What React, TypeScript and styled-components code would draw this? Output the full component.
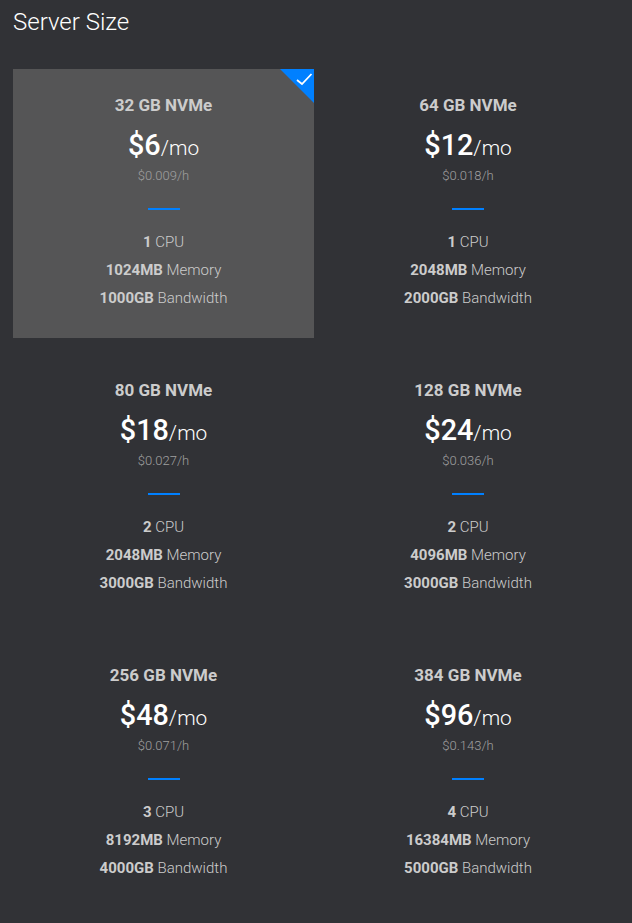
import React from "react";
import styled, { createGlobalStyle } from "styled-components";

const Global = createGlobalStyle`
  html, body { margin: 0; padding: 0; background: #313236; }
  body { font-family: Roboto, "Liberation Sans", sans-serif; }
`;

const Page = styled.div`
  width: 632px;
  height: 923px;
  overflow: hidden;
  box-sizing: border-box;
  padding: 8px 0 0 13px;
  background: #313236;
`;

const Title = styled.h2`
  margin: 0 0 33px;
  font-size: 24px;
  line-height: 28px;
  font-weight: 300;
  color: #fff;
`;

const Grid = styled.div`
  display: grid;
  grid-template-columns: 301px 301px;
  column-gap: 3.5px;
  row-gap: 16px;
`;

const Card = styled.div<{ $selected?: boolean }>`
  position: relative;
  height: 269px;
  box-sizing: border-box;
  padding-top: 26px;
  text-align: center;
  background: ${(p) => (p.$selected ? "#555556" : "transparent")};
`;

const Corner = styled.svg`
  position: absolute;
  top: 0;
  right: 0;
  width: 34px;
  height: 34px;
`;

const Name = styled.div`
  font-size: 17px;
  line-height: 20px;
  font-weight: 700;
  color: #ccc;
`;

const Price = styled.div`
  margin-top: 12px;
  font-size: 20.8px;
  line-height: 36px;
  font-weight: 300;
  color: #fff;
`;

const Amount = styled.span`
  font-size: 28.8px;
  font-weight: 500;
`;

const Hourly = styled.div`
  margin-top: 2px;
  font-size: 13px;
  line-height: 16px;
  font-weight: 300;
  color: #a0a0a0;
`;

const Divider = styled.div`
  width: 32px;
  height: 2px;
  margin: 24px auto 18px;
  background: #0080ff;
`;

const Spec = styled.div`
  font-size: 15px;
  line-height: 28px;
  font-weight: 300;
  color: #ccc;
`;

const Strong = styled.strong`
  font-weight: 700;
`;

const plans = [
  { name: "32 GB NVMe", price: 6, hourly: "0.009", cpu: 1, mem: 1024, bw: 1000 },
  { name: "64 GB NVMe", price: 12, hourly: "0.018", cpu: 1, mem: 2048, bw: 2000 },
  { name: "80 GB NVMe", price: 18, hourly: "0.027", cpu: 2, mem: 2048, bw: 3000 },
  { name: "128 GB NVMe", price: 24, hourly: "0.036", cpu: 2, mem: 4096, bw: 3000 },
  { name: "256 GB NVMe", price: 48, hourly: "0.071", cpu: 3, mem: 8192, bw: 4000 },
  { name: "384 GB NVMe", price: 96, hourly: "0.143", cpu: 4, mem: 16384, bw: 5000 },
];

export default function App() {
  return (
    <Page>
      <Global />
      <Title>Server Size</Title>
      <Grid>
        {plans.map((p, i) => (
          <Card key={p.name} $selected={i === 0}>
            {i === 0 && (
              <Corner viewBox="0 0 34 34">
                <polygon points="0,0 34,0 34,34" fill="#0080ff" />
                <path d="M17 11 L22 15 L31.5 5" fill="none" stroke="#fff" strokeWidth="1.8" />
              </Corner>
            )}
            <Name>{p.name}</Name>
            <Price>
              <Amount>${p.price}</Amount>/mo
            </Price>
            <Hourly>${p.hourly}/h</Hourly>
            <Divider />
            <Spec><Strong>{p.cpu}</Strong> CPU</Spec>
            <Spec><Strong>{p.mem}MB</Strong> Memory</Spec>
            <Spec><Strong>{p.bw}GB</Strong> Bandwidth</Spec>
          </Card>
        ))}
      </Grid>
    </Page>
  );
}
